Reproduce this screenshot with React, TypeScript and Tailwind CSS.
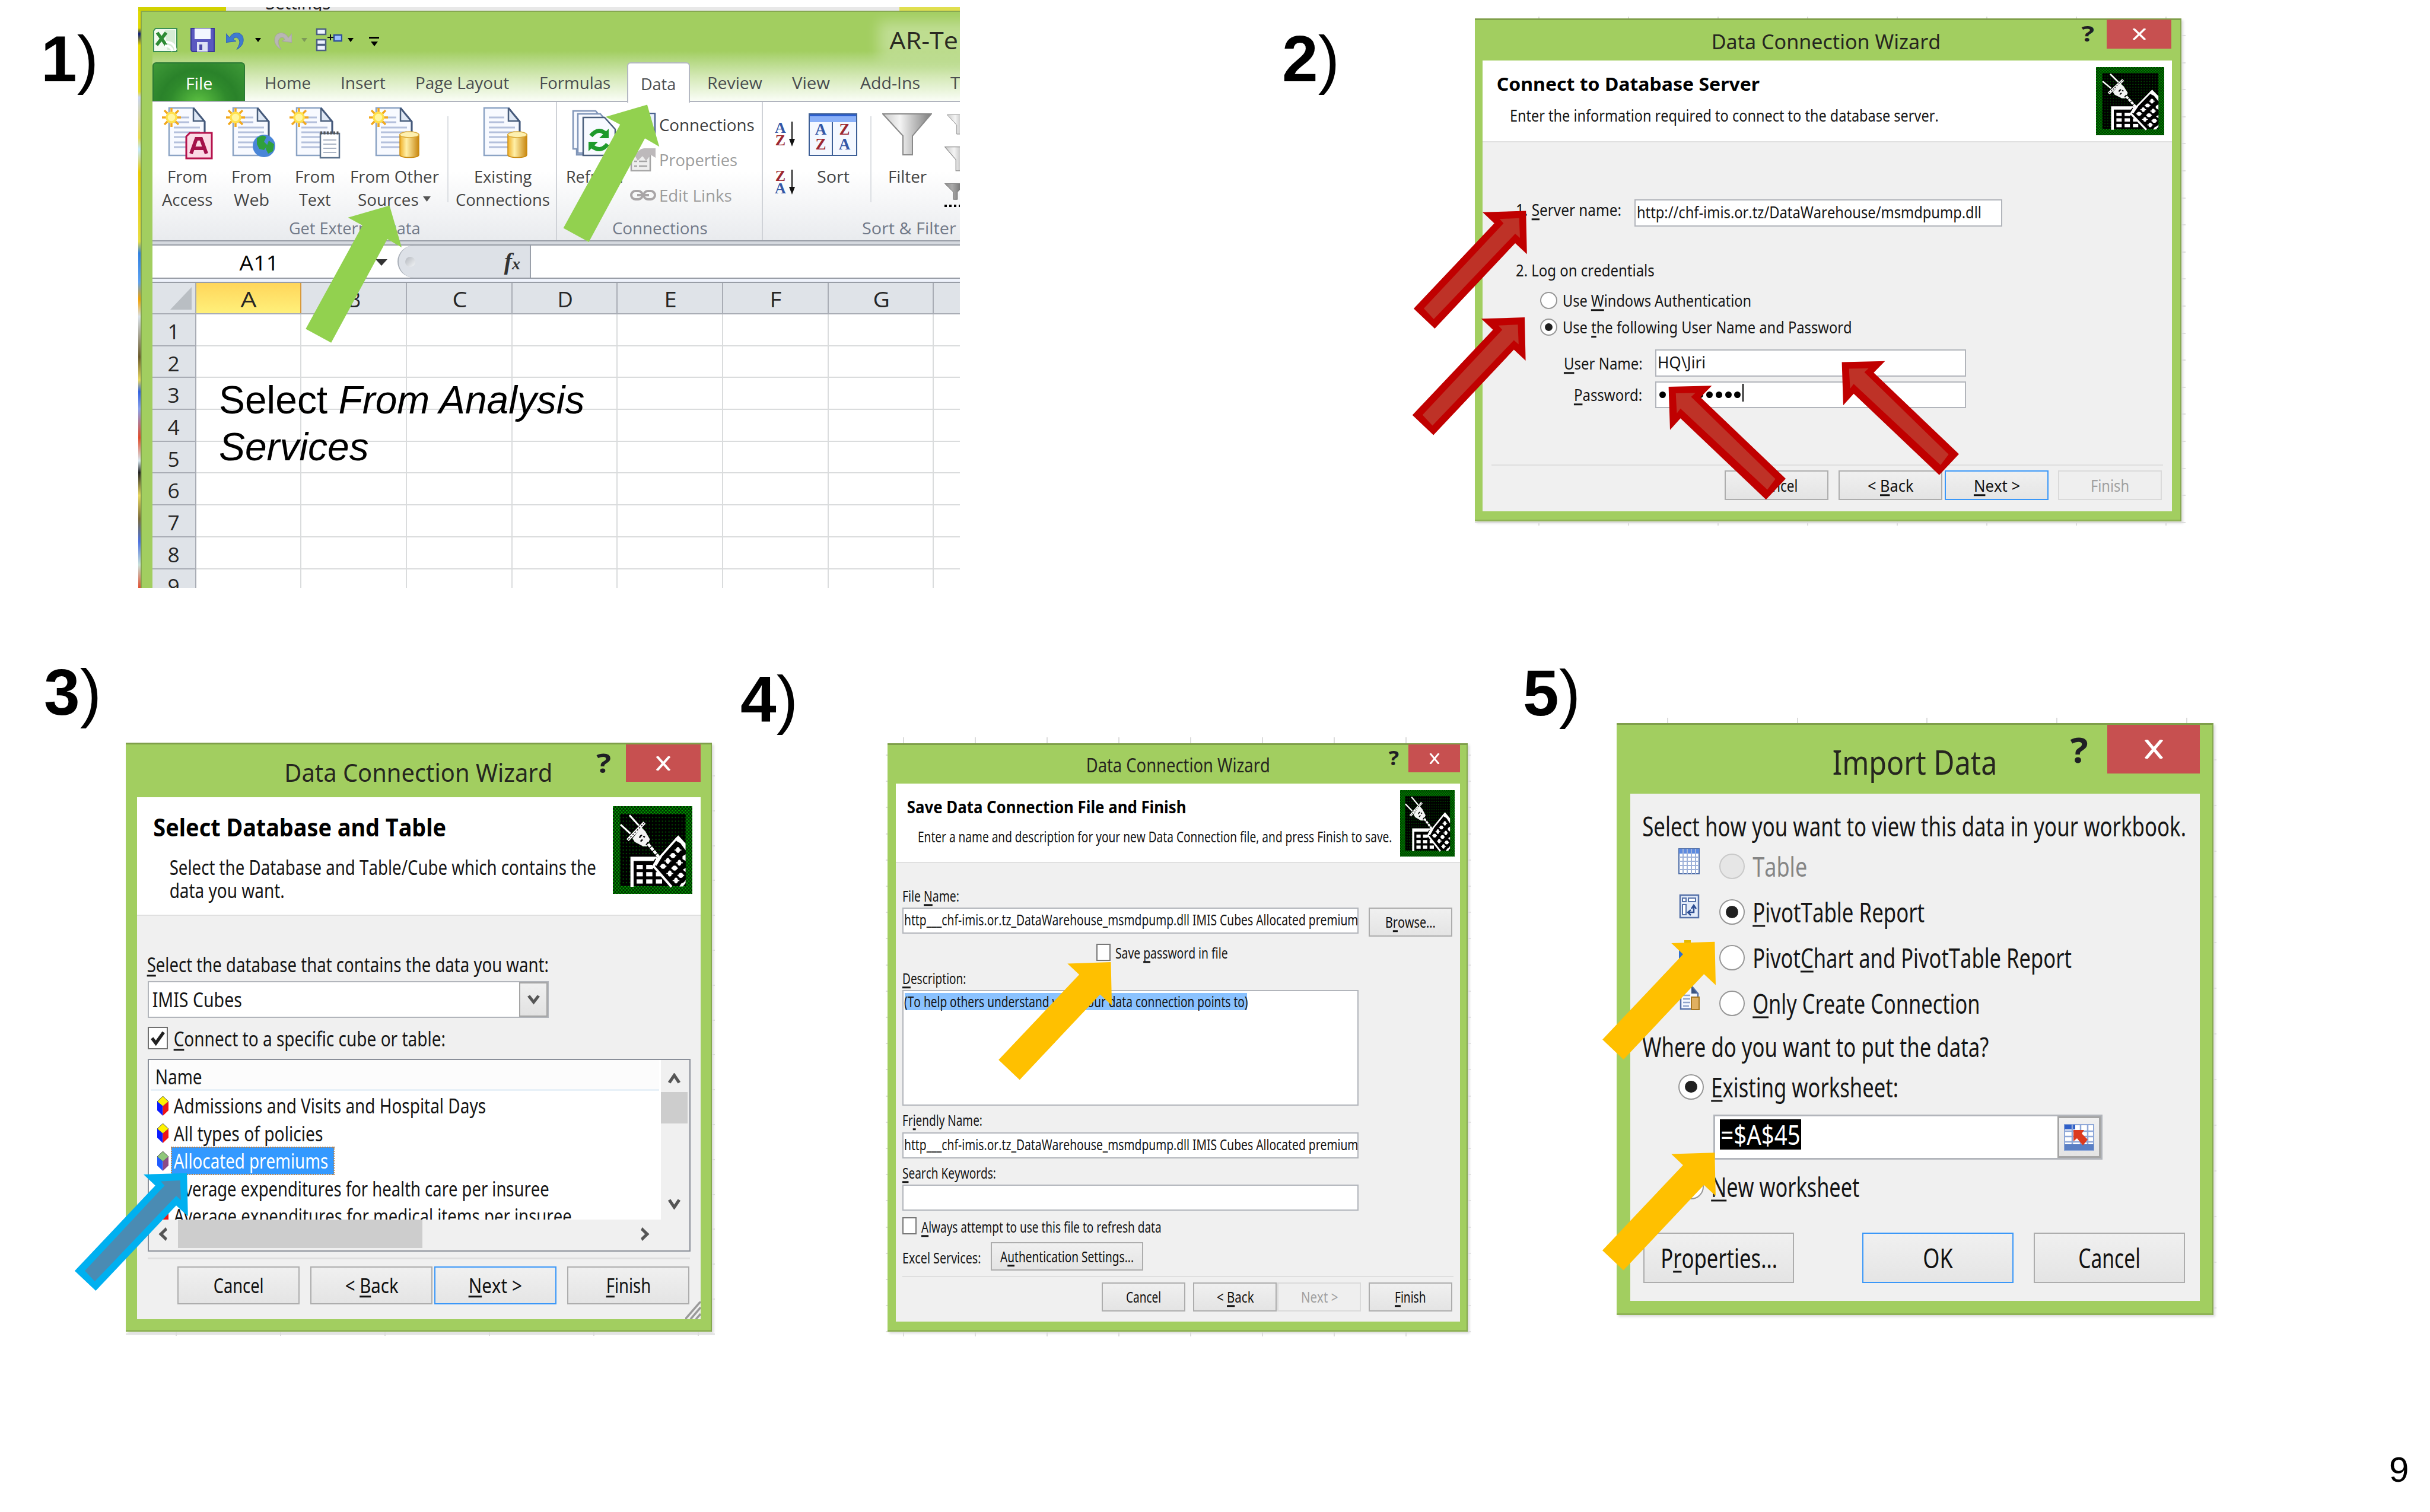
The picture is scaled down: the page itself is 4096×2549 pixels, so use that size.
import React, { useLayoutEffect, useRef, useState } from "react";

type Kids = { children?: React.ReactNode };

/** Single line of text whose ink is condensed or widened to an exact width. */
function T({ w, className = "", children }: Kids & { w: number; className?: string }) {
  const ref = useRef<HTMLSpanElement>(null);
  const [transform, setTransform] = useState("none");
  useLayoutEffect(() => {
    const el = ref.current;
    if (!el) return;
    const fs = parseFloat(getComputedStyle(el).fontSize);
    const k = (w + 0.09 * fs) / el.offsetWidth;
    setTransform(`translate(-0.04em,0.01em) scaleX(${k})`);
  }, [w]);
  return (
    <span className={`block shrink-0 leading-none whitespace-nowrap [font-kerning:none] ${className}`} style={{ width: w }}>
      <span ref={ref} className="inline-block origin-left leading-none whitespace-pre" style={{ transform }}>
        {children}
      </span>
    </span>
  );
}

const U = ({ children }: Kids) => (
  <span className="underline decoration-[2.5px] underline-offset-[4px] [text-decoration-skip-ink:none]">{children}</span>
);

/* ---------- dialog pieces ---------- */

type WinProps = Kids & {
  pos: string;
  bar: string;
  title: string;
  titleW: number;
  titleBox: string;
  help: string;
  helpW: number;
  close: string;
  x: string;
  body: string;
};

function Win({ pos, bar, title, titleW, titleBox, help, helpW, close, x, body, children }: WinProps) {
  return (
    <section
      className={`absolute bg-[#a2ce60] shadow-[inset_0_3px_0_#7f9f4a,inset_-2px_0_0_#86a850,inset_0_-3px_0_#8fb355,3px_3px_4px_#dcdcdc] ${pos}`}
    >
      <header className={`flex items-start ${bar}`}>
        <div className={`flex items-center text-[#26261f] ${titleBox}`}>
          <T w={titleW}>{title}</T>
        </div>
        <div className={`flex items-center font-bold text-[#1f1f24] ${help}`}>
          <T w={helpW}>?</T>
        </div>
        <div className={`flex items-center justify-center bg-[#c75050] ${close}`}>
          <svg viewBox="0 0 20 20" preserveAspectRatio="none" className={x}>
            <path d="M1.800 0L18.200 20M18.200 0L1.800 20" stroke="#fff" strokeWidth="3.200" />
          </svg>
        </div>
      </header>
      <div className={`relative flex flex-col overflow-hidden bg-[#f0f0f0] ${body}`}>{children}</div>
    </section>
  );
}

function Btn({ w, className = "", state = "normal", children }: Kids & { w: number; className?: string; state?: "normal" | "focus" | "off" }) {
  const look =
    state === "focus"
      ? "border-[#3a97f8] bg-linear-to-b from-[#f0f0f0] to-[#e5e5e5] text-[#111]"
      : state === "off"
        ? "border-[#dadada] bg-[#efefef] text-[#a0a0a0]"
        : "border-[#adadad] bg-linear-to-b from-[#f0f0f0] to-[#e4e4e4] text-[#111]";
  return (
    <div className={`flex shrink-0 items-center justify-center border-[2.5px] ${look} ${className}`}>
      <T w={w}>{children}</T>
    </div>
  );
}

const Field = ({ className = "", children }: Kids & { className?: string }) => (
  <div className={`flex shrink-0 overflow-hidden border-2 border-[#b2b5bb] bg-white ${className}`}>{children}</div>
);

function Radio({ size, on = false, off = false }: { size: string; on?: boolean; off?: boolean }) {
  return (
    <div
      className={`flex shrink-0 items-center justify-center rounded-full border-[2.5px] ${size} ${off ? "border-[#c9c9c9] bg-[#e6e6e6]" : "border-[#979797] bg-white"}`}
    >
      {on && <div className="size-[52%] rounded-full bg-[#212121]" />}
    </div>
  );
}

function DbIcon({ className }: { className: string }) {
  const key = "M0 0h44v30h-44z";
  return (
    <svg viewBox="25 28 565 620" preserveAspectRatio="none" className={`shrink-0 ${className}`}>
      <defs>
        <pattern id="rim" x="25" y="28" width="23.200" height="25" patternUnits="userSpaceOnUse">
          <rect width="23.200" height="25" fill="#002b00" />
          <circle cx="6" cy="6" r="6" fill="#00a000" />
          <circle cx="17.600" cy="18.500" r="6" fill="#00a000" />
        </pattern>
        <pattern id="dots" x="88" y="98" width="23.200" height="25.500" patternUnits="userSpaceOnUse">
          <circle cx="11" cy="11" r="4.500" fill="#005a00" />
        </pattern>
      </defs>
      <rect x="25" y="28" width="565" height="620" fill="url(#rim)" />
      <rect x="78" y="84" width="464" height="508" fill="#000" />
      <rect x="78" y="84" width="464" height="508" fill="url(#dots)" />
      <path d="M150 385H340V415H173V598H150z" fill="#fff" />
      <path d="M173 418H310L340 470 440 592H173z" fill="#000" />
      {[443, 494, 545].map((y) =>
        [194, 262, 331].map((x) => (y === 443 && x === 331 ? null : <path key={`${x}-${y}`} d={key} transform={`translate(${x} ${y})`} fill="#fff" />)),
      )}
      <path d="M316 445L490 250 542 320V592H436z" fill="#000" />
      <path d="M143 92L210 165M80 158L150 222" stroke="#fff" strokeWidth="13" />
      <path d="M130 268L250 145" stroke="#fff" strokeWidth="22" />
      <path d="M134 264L246 149" stroke="#000" strokeWidth="6" strokeDasharray="12 10" />
      <path d="M165 255L228 178 255 205 288 262 268 312 240 312 180 280z" fill="#f4f4f4" />
      <path d="M215 252q4-16 18-18M222 278l14-14M242 240l10 8M262 302l16-20" stroke="#000" strokeWidth="10" fill="none" />
      <path d="M275 295L350 385" stroke="#fff" strokeWidth="20" strokeDasharray="26 6" />
      <path d="M300 470L350 400 480 255" stroke="#fff" strokeWidth="15" fill="none" />
      <path d="M310 440L350 380 375 385 335 450z" fill="#fff" />
      <path d="M314 452L442 598" stroke="#fff" strokeWidth="17" />
      <path d="M330 400l-15 20" stroke="#000" strokeWidth="7" />
      <path d="M490 234L542 292V340L505 290 478 275 470 255z" fill="#fff" />
      {[
        [488, 338],
        [452, 377],
        [416, 415],
        [382, 453],
        [498, 428],
        [464, 466],
        [430, 504],
        [508, 517],
        [474, 554],
      ].map(([cx, cy], i) => (
        <g key={cx} fill="#fff">
          <ellipse cx={cx} cy={cy} rx={i % 2 ? 18 : 14} ry={i % 2 ? 18 : 21} />
          <rect x={cx - 24} y={cy - 4} width="48" height="8" />
        </g>
      ))}
      <path d="M542 368l-22 14v20l22 14zM542 465l-20 12 20 16zM542 548q-8 20-30 26l-14 22h24l20-24z" fill="#fff" />
    </svg>
  );
}

function Chevron({ d, className }: { d: string; className: string }) {
  return (
    <svg viewBox="0 0 20 20" preserveAspectRatio="none" className={className}>
      <path d={d} fill="none" stroke="#555" strokeWidth="5" />
    </svg>
  );
}

/* ---------- Excel window icons ---------- */

const Tri = ({ className, fill = "#000" }: { className: string; fill?: string }) => (
  <svg viewBox="0 0 10 6" preserveAspectRatio="none" className={`shrink-0 ${className}`}>
    <path d="M0 0h10L5 6z" fill={fill} />
  </svg>
);

const Sheet = ({ x = 12 }: { x?: number }) => (
  <g transform={`translate(${x} 0)`}>
    <path d="M0 1h41l19 23v57H0z" fill="#f8faff" stroke="#8ba3c4" strokeWidth="2.500" />
    <path d="M41 1v22h19" fill="#dfe8f5" stroke="#4a5f7d" strokeWidth="2.500" />
    <path d="M41 1l19 23v57" fill="none" stroke="#45597a" strokeWidth="3" />
    <path d="M8 17h26M8 25h26M8 34h44M8 42h44M8 50h44M8 59h44M8 67h44" stroke="#b4c0dc" strokeWidth="3" />
  </g>
);

const Spark = () => (
  <g stroke="#f2a81d" strokeWidth="3.500">
    <path d="M16 1v32M0 17h32M4 5l24 24M28 5L4 29" />
    <circle cx="16" cy="17" r="8" fill="#fff6a0" stroke="#ffe14d" />
  </g>
);

const Cylinder = () => (
  <g>
    <path d="M52 46v34c0 6 32 6 32 0V46z" fill="url(#gold)" stroke="#c98a10" strokeWidth="1.500" />
    <ellipse cx="68" cy="46" rx="16" ry="5" fill="#fdf0b0" stroke="#d9a93a" strokeWidth="1.500" />
  </g>
);

function DocIcon({ kind }: { kind: "access" | "web" | "text" | "other" | "existing" }) {
  return (
    <svg viewBox="0 0 86 87" className="h-[87px] w-[86px] overflow-visible">
      <defs>
        <linearGradient id="gold">
          <stop offset="0" stopColor="#f0b028" />
          <stop offset=".35" stopColor="#fff0a8" />
          <stop offset="1" stopColor="#c98710" />
        </linearGradient>
      </defs>
      <Sheet />
      {kind !== "existing" && <Spark />}
      {kind === "access" && (
        <g>
          <path d="M47 43h37v43H41V49z" fill="#fbdbe6" stroke="#b5124c" strokeWidth="3" />
          <path d="M49 78L58 53h8l9 25M54 69h17" fill="none" stroke="#a3114a" strokeWidth="6" />
        </g>
      )}
      {kind === "web" && (
        <g>
          <circle cx="64" cy="65" r="19" fill="#4a86d8" />
          <path d="M52 52q10-8 16-2l-4 8 6 6-6 8-8-2-4-8zM72 56l9 6-2 12-8 4-4-8z" fill="#2fa03c" />
        </g>
      )}
      {kind === "text" && (
        <g>
          <path d="M52 44h32v41H52z" fill="#fff" stroke="#5c728c" strokeWidth="2.500" />
          <path d="M52 43h32" stroke="#555" strokeWidth="5" strokeDasharray="3 2.500" />
          <path d="M57 55h22M57 62h22M57 69h22M57 76h22" stroke="#aab4c4" strokeWidth="2" />
        </g>
      )}
      {(kind === "other" || kind === "existing") && <Cylinder />}
    </svg>
  );
}

function BigButton({ w, icon, l1, w1, l2, w2, arrow = false }: { w: string; icon: React.ReactNode; l1: string; w1: number; l2?: string; w2?: number; arrow?: boolean }) {
  return (
    <div className={`flex shrink-0 flex-col items-center pt-[8.5px] ${w}`}>
      <div className="flex h-[87px] items-center justify-center">{icon}</div>
      <div className="mt-[10.500px] flex h-[38px] items-center">
        <T w={w1}>{l1}</T>
      </div>
      <div className="flex h-[39px] items-center gap-[9px]">
        {l2 && <T w={w2 ?? 10}>{l2}</T>}
        {arrow && <Tri className="h-[9px] w-[13px]" fill="#555" />}
      </div>
    </div>
  );
}

function AZ({ top, bottom, tc, bc }: { top: string; bottom: string; tc: string; bc: string }) {
  return (
    <div className="flex h-[42px] w-[34px] items-stretch justify-between font-['Liberation_Serif',serif] text-[26px] font-bold">
      <div className="flex flex-col items-center justify-between leading-[21px]">
        <span className={tc}>{top}</span>
        <span className={bc}>{bottom}</span>
      </div>
      <svg viewBox="0 0 10 42" className="h-[42px] w-[10px]">
        <path d="M5 0v34" stroke="#111" strokeWidth="2" />
        <path d="M0 29h10L5 42z" fill="#111" />
      </svg>
    </div>
  );
}

function Funnel({ className }: { className: string }) {
  return (
    <svg viewBox="0 0 84 72" preserveAspectRatio="none" className={className}>
      <defs>
        <linearGradient id="steel">
          <stop offset="0" stopColor="#c9c9c9" />
          <stop offset=".35" stopColor="#f4f4f4" />
          <stop offset="1" stopColor="#7d7d7d" />
        </linearGradient>
      </defs>
      <path d="M1 1h82L51 38v32H35V38z" fill="url(#steel)" stroke="#8a8a8a" strokeWidth="2" />
    </svg>
  );
}

/* ---------- panel 1 ---------- */

const cols = ["A", "B", "C", "D", "E", "F", "G", ""];
const colW = [24, 18, 22, 23, 18, 17, 25, 0];

function ExcelWindow() {
  return (
    <section className="absolute top-[12px] left-[233px] flex h-[979px] w-[1385px] flex-col overflow-hidden bg-white font-['Open_Sans','Noto_Sans',sans-serif] text-[28px] text-[#444]">
      <div className="flex h-[6px] shrink-0 overflow-hidden">
        <div className="w-[148px] bg-[#d2d200]" />
        <div className="flex flex-1 items-end bg-[#e8e8e8] pl-[68px] font-['Noto_Sans',sans-serif] text-[32px] leading-none text-[#222]">
          <div className="mb-[-2px] flex">
            <T w={107}>Settings</T>
          </div>
        </div>
        <div className="w-[102px] bg-[#e0df4e]" />
      </div>
      <div className="flex min-h-0 flex-1">
        <div className="w-[4px] shrink-0 bg-[linear-gradient(180deg,#e0d800_0%,#e0d800_3%,#0a1a7a_4%,#e6d800_6%,#e8dc20_14%,#c8d4f0_15%,#e6d84a_22%,#bfe8ff_24%,#e8c800_28%,#e8dc40_40%,#2f7fe0_42%,#5aa0f0_47%,#f0a000_50%,#d8e0e8_53%,#6a5a2a_60%,#e8d860_64%,#2f5fe0_66%,#8aa0e8_69%,#e04a2a_74%,#d8e8f0_78%,#222_80%,#e8d860_84%,#7a6a3a_88%,#4a70e0_92%,#c8e0d8_96%,#e05030_100%)]" />
        <div className="flex min-w-0 flex-1 flex-col border-t-[2.5px] border-l-2 border-[#86a850] bg-[#a2ce60] pl-[18px]">
          {/* title + tabs */}
          <div className="flex h-[150px] shrink-0 flex-col bg-linear-to-b from-[#a2ce60] from-44% via-[#d3e8b4] via-72% to-[#fafdf6]">
            <div className="flex h-[85px] shrink-0 items-center pt-[9px]">
              <svg viewBox="0 0 41 41" className="ml-px size-[41px] shrink-0">
                <path d="M4 1h36v39H1V5z" fill="#f2faf0" stroke="#3b8f55" strokeWidth="2" />
                <path d="M20 4h17v33H24z" fill="#d6ecd4" />
                <path d="M7 8l15 21M22 8L6 29" stroke="#2e8b34" strokeWidth="5.500" />
                <path d="M22 24q14 0 16 13M20 30q10 0 13 9" stroke="#fff" strokeWidth="4" fill="none" />
              </svg>
              <div className="ml-[12px] h-[46px] w-[2px] bg-[#7f9c56]" />
              <svg viewBox="0 0 41 41" className="ml-[10px] size-[41px] shrink-0">
                <path d="M1 1h39v39H3l-2-3z" fill="#5a58c0" stroke="#3a389a" strokeWidth="2" />
                <path d="M7 1h27v18H7z" fill="#f3f6ff" />
                <path d="M11 24h18v16H11z" fill="#dfe3f5" />
                <path d="M15 28h5v9h-5z" fill="#4b49a8" />
              </svg>
              <svg viewBox="0 0 31 32" className="ml-[19px] h-[33px] w-[31px] shrink-0">
                <path d="M6 12C12 0 28 2 29 14C30 22 25 28 18 32C22 25 25 19 21 14C18 10 14 11 12 15L17 18L0 20L0 5z" fill="#3f7ad0" stroke="#2c5fb4" strokeWidth="1" />
              </svg>
              <Tri className="ml-[18px] h-[7px] w-[10px]" />
              <svg viewBox="0 0 31 32" className="ml-[21px] h-[33px] w-[31px] shrink-0">
                <path d="M25 12C19 0 3 2 2 14C1 22 6 28 13 32C9 25 6 19 10 14C13 10 17 11 19 15L14 18L31 20L31 5z" fill="#b9b6b4" stroke="#a5a29f" strokeWidth="1" />
              </svg>
              <Tri className="ml-[16px] h-[7px] w-[10px]" fill="#7d9a58" />
              <svg viewBox="0 0 45 40" className="ml-[14px] h-[40px] w-[45px] shrink-0">
                <path d="M2 2h15v9H2zM2 20h15v8H2zM2 29h15v9H2z" fill="#eef3ff" stroke="#4b5f80" strokeWidth="2.500" />
                <path d="M31 12h13v10H31z" fill="#9dc0ff" stroke="#2f4f9a" strokeWidth="2.500" />
                <path d="M20 16h10M25 11v10" stroke="#111" strokeWidth="2" />
              </svg>
              <Tri className="ml-[9px] h-[7px] w-[10px]" />
              <div className="ml-[13px] h-[46px] w-[2px] bg-[#7f9c56]" />
              <div className="mt-[6px] ml-[13px] flex flex-col items-center gap-[5px]">
                <div className="h-[3px] w-[17px] bg-black" />
                <Tri className="h-[8px] w-[12px]" />
              </div>
              <div className="ml-[858px] flex h-[30px] w-[140px] shrink-0 items-center bg-white/30 pl-[4px] text-[41px] text-[#2a2a22] shadow-[0_0_22px_16px_rgba(255,255,255,0.32)]">
                <T w={112}>AR-Te</T>
              </div>
            </div>
            <nav className="flex h-[65px] shrink-0 items-center text-[#4a4d50]">
              <div className="flex h-[65px] w-[156px] shrink-0 items-center justify-center rounded-t-[6px] border-2 border-b-0 border-[#2c7a35] bg-[radial-gradient(ellipse_at_50%_110%,#5fc443_0%,#2f8a2c_45%,#2a822a_60%,#3f9a38_100%)] pt-[2px] text-white">
                <T w={42.5}>File</T>
              </div>
              <div className="flex h-full items-center pt-[3px]">
                <T w={75.5} className="ml-[34px]">Home</T>
                <T w={73} className="ml-[52px]">Insert</T>
                <T w={156} className="ml-[53px]">Page Layout</T>
                <T w={118} className="ml-[53px]">Formulas</T>
              </div>
              <div className="relative z-10 mb-[-3px] ml-[29px] flex h-[68px] w-[106px] shrink-0 items-center justify-center rounded-t-[6px] border-[2.5px] border-b-0 border-[#b4b8c2] bg-white pt-px">
                <T w={56.5}>Data</T>
              </div>
              <div className="flex h-full items-center pt-[3px]">
                <T w={90} className="ml-[30px]">Review</T>
                <T w={61.5} className="ml-[53.5px]">View</T>
                <T w={98.5} className="ml-[53.500px]">Add-Ins</T>
                <T w={75} className="ml-[53px]">Team</T>
              </div>
            </nav>
          </div>
          {/* ribbon */}
          <div className="flex h-[235px] shrink-0 border-t-[2.500px] border-[#b0b4be] bg-linear-to-b from-white from-50% to-[#e9ebee]">
            <div className="flex w-[682px] shrink-0 flex-col border-r-[2.500px] border-[#cfd2d7]">
              <div className="flex h-[192px] pl-[4px]">
                <BigButton w="w-[109px]" icon={<DocIcon kind="access" />} l1="From" w1={65.5} l2="Access" w2={83} />
                <BigButton w="w-[108px]" icon={<DocIcon kind="web" />} l1="From" w1={66} l2="Web" w2={58} />
                <BigButton w="w-[106px]" icon={<DocIcon kind="text" />} l1="From" w1={66} l2="Text" w2={51.5} />
                <BigButton w="w-[162px]" icon={<DocIcon kind="other" />} l1="From Other" w1={147.5} l2="Sources" w2={100} arrow />
                <div className="mt-[24px] ml-[8px] h-[145px] w-[2px] shrink-0 bg-[#dcdfe3]" />
                <BigButton w="ml-[5px] w-[172px]" icon={<DocIcon kind="existing" />} l1="Existing" w1={95} l2="Connections" w2={156} />
              </div>
              <div className="flex h-[40px] items-center justify-center text-[#717988]">
                <T w={219}>Get External Data</T>
              </div>
            </div>
            <div className="flex w-[347px] shrink-0 flex-col border-r-[2.500px] border-[#cfd2d7]">
              <div className="flex h-[192px]">
                <BigButton
                  w="ml-[3px] w-[120px]"
                  icon={
                    <svg viewBox="0 0 76 78" className="h-[80px] w-[76px]">
                      <g fill="#f8faff" stroke="#7f95b8" strokeWidth="2.500">
                        <path d="M2 2h38l10 12v62H8V66H2z" />
                        <path d="M10 7h38l10 12v54H10z" />
                        <path d="M19 13h36l18 20v44H19z" stroke="#4a5f7d" />
                      </g>
                      <path d="M32 44q14-16 26-2M60 58q-12 16-28 2" fill="none" stroke="#1f9a2c" strokeWidth="7" />
                      <path d="M62 32v16H46zM28 70V54h16z" fill="#1f9a2c" />
                    </svg>
                  }
                  l1="Refresh"
                  w1={94}
                />
                <div className="flex flex-col pt-[8px] text-[#9c9c9c]">
                  <div className="flex h-[59.500px] items-center gap-[6px] text-[#3c3c3c]">
                    <svg viewBox="0 0 44 40" className="h-[40px] w-[44px]">
                      <path d="M2 6h26v32H2zM18 1h24v38H18z" fill="#eaf1fc" stroke="#4a6390" strokeWidth="2.500" />
                    </svg>
                    <T w={158}>Connections</T>
                  </div>
                  <div className="flex h-[59.500px] items-center gap-[6px]">
                    <svg viewBox="0 0 44 40" className="h-[40px] w-[44px]">
                      <path d="M2 13h32v26H2z" fill="#eee" stroke="#a5a5a5" strokeWidth="2.500" />
                      <path d="M8 13q8-12 16-12h19v16l-8-5-8 10-6-8-8 8z" fill="#bdb9bb" />
                      <path d="M7 23h5M15 23h14M7 31h5M15 31h14" stroke="#a5a5a5" strokeWidth="2.500" />
                    </svg>
                    <T w={130}>Properties</T>
                  </div>
                  <div className="flex h-[59.500px] items-center gap-[6px]">
                    <svg viewBox="0 0 44 20" className="h-[20px] w-[44px]">
                      <g fill="none" stroke="#a9a5a7" strokeWidth="4">
                        <rect x="2" y="3" width="19" height="14" rx="7" />
                        <rect x="23" y="3" width="19" height="14" rx="7" />
                        <path d="M12 10h20" />
                      </g>
                    </svg>
                    <T w={120.5}>Edit Links</T>
                  </div>
                </div>
              </div>
              <div className="flex h-[40px] items-center justify-center text-[#717988]">
                <T w={158}>Connections</T>
              </div>
            </div>
            <div className="flex w-[400px] shrink-0 flex-col">
              <div className="flex h-[192px]">
                <div className="ml-[20px] flex w-[34px] flex-col gap-[39px] pt-[33px]">
                  <AZ top="A" bottom="Z" tc="text-[#3457a6]" bc="text-[#9c2730]" />
                  <AZ top="Z" bottom="A" tc="text-[#9c2730]" bc="text-[#3457a6]" />
                </div>
                <BigButton
                  w="ml-[9px] w-[110px]"
                  icon={
                    <div className="mt-[5px] flex h-[72px] w-[82px] flex-col border-[2.500px] border-[#3d5f96] bg-[#f4f8ff] font-['Liberation_Serif',serif] text-[27px] leading-[27px] font-bold">
                      <div className="h-[13px] shrink-0 border-t-[3px] border-[#2c5fd0] bg-[#8ab0f8]" />
                      <div className="grid flex-1 grid-cols-2 text-center">
                        <div className="flex flex-col border-r-[2.500px] border-[#3d5f96] leading-[25px]">
                          <span className="text-[#3457a6]">A</span>
                          <span className="text-[#9c2730]">Z</span>
                        </div>
                        <div className="flex flex-col leading-[25px]">
                          <span className="text-[#9c2730]">Z</span>
                          <span className="text-[#3457a6]">A</span>
                        </div>
                      </div>
                    </div>
                  }
                  l1="Sort"
                  w1={53}
                />
                <div className="mt-[24px] ml-[8px] h-[145px] w-[2px] shrink-0 bg-[#dcdfe3]" />
                <BigButton w="ml-[5px] w-[110px]" icon={<Funnel className="mt-[5px] h-[72px] w-[84px]" />} l1="Filter" w1={63} />
                <div className="ml-[8px] flex flex-col gap-[20px] pt-[21px]">
                  <Funnel className="ml-[4px] h-[34px] w-[40px]" />
                  <Funnel className="h-[42px] w-[46px]" />
                  <div className="flex flex-col">
                    <Funnel className="h-[28px] w-[36px] brightness-70" />
                    <div className="mt-[8px] h-[4px] w-[40px] bg-[repeating-linear-gradient(90deg,#000_0_4px,transparent_4px_8px)]" />
                  </div>
                </div>
              </div>
              <div className="flex h-[40px] items-center pl-[168px] text-[#717988]">
                <T w={156}>Sort &amp; Filter</T>
              </div>
            </div>
          </div>
          {/* formula bar */}
          <div className="flex h-[9px] shrink-0 flex-col border-t-2 border-b-2 border-[#989da6] bg-[#d5d9df]" />
          <div className="flex h-[54px] shrink-0 items-stretch bg-[#dde1e7] text-[35px] text-black">
            <div className="flex w-[413px] shrink-0 items-center bg-white pt-[2px] pl-[148px]">
              <T w={63}>A11</T>
              <Tri className="ml-[165px] h-[11px] w-[20px]" fill="#333" />
            </div>
            <div className="flex w-[223px] shrink-0 items-center bg-white">
              <div className="flex h-full flex-1 items-center justify-between rounded-l-full border-l-2 border-[#a9afb8] bg-[#dde1e7] pr-[16px] pl-[11px]">
                <div className="size-[17px] rounded-full bg-linear-to-br from-[#b4b8be] to-[#f4f6f8]" />
                <span className="font-['Liberation_Serif',serif] text-[40px] leading-none font-bold text-[#333] italic">
                  f<span className="text-[28px]">x</span>
                </span>
              </div>
            </div>
            <div className="flex-1 border-l-2 border-[#9aa0aa] bg-white" />
          </div>
          <div className="h-[9px] shrink-0 border-t-2 border-b-[2.500px] border-[#989da6] bg-[#eef2fb]" />
          {/* grid */}
          <div className="flex h-[53px] shrink-0 border-b-[2.500px] border-[#a9adb5] bg-[#dfe3e8] text-[36px] text-[#262626]">
            <div className="flex w-[73.500px] shrink-0 items-end justify-end border-r-2 border-[#a9adb5] pr-[6px] pb-[6px]">
              <svg viewBox="0 0 36 38" className="h-[38px] w-[36px]">
                <path d="M36 0v38H0z" fill="#b9bec3" />
              </svg>
            </div>
            {cols.map((c, i) => (
              <div
                key={i}
                className={`flex w-[177.700px] shrink-0 items-center justify-center border-r-2 pt-[5px] pl-[2px] ${i === 0 ? "border-[#d99a3a] bg-linear-to-b from-[#ffd65a] to-[#fff07a]" : "border-[#a9adb5]"}`}
              >
                {c && <T w={colW[i]}>{c}</T>}
              </div>
            ))}
          </div>
          {[1, 2, 3, 4, 5, 6, 7, 8, 9].map((n) => (
            <div key={n} className="flex h-[53.700px] shrink-0 bg-white text-[35px] text-[#262626]">
              <div className="flex w-[73.500px] shrink-0 items-center justify-center border-r-2 border-b-2 border-[#a9adb5] bg-[#dfe3e8] pt-[5px]">
                <T w={17}>{n}</T>
              </div>
              {cols.map((_, i) => (
                <div key={i} className="w-[177.700px] shrink-0 border-r-2 border-b-2 border-[#dadcdd]" />
              ))}
            </div>
          ))}
        </div>
      </div>
    </section>
  );
}

/* ---------- panel 2 ---------- */

function ServerDialog() {
  return (
    <Win
      pos="left-[2486px] top-[31px] w-[1191px] h-[848px]"
      bar="h-[71px]"
      title="Data Connection Wizard"
      titleW={384}
      titleBox="ml-[400px] h-[77px] text-[34px]"
      help="ml-[240px] h-[52px] text-[36px]"
      helpW={18}
      close="ml-[23px] mt-[2px] h-[49px] w-[109px]"
      x="h-[19px] w-[24px]"
      body="ml-[13px] w-[1162px] h-[760px]"
    >
      <div className="flex h-[138px] shrink-0 border-b-2 border-[#e0e0e0] bg-white">
        <div className="flex w-[1034px] shrink-0 flex-col">
          <div className="mt-[19px] flex h-[40px] items-center pl-[25px] text-[31px] font-bold text-black">
            <T w={441}>Connect to Database Server</T>
          </div>
          <div className="mt-[13px] flex h-[40px] items-center pl-[47px]">
            <T w={720}>Enter the information required to connect to the database server.</T>
          </div>
        </div>
        <DbIcon className="mt-[11px] h-[115px] w-[115px]" />
      </div>
      <div className="mt-[96px] flex h-[46px] items-start pl-[57px]">
        <div className="flex h-[34px] items-center">
          <T w={176}>
            1. <U>S</U>erver name:
          </T>
        </div>
        <Field className="ml-[23px] h-[46px] w-[620px] items-center pb-[3px] pl-[3px]">
          <T w={579}>http://chf-imis.or.tz/DataWarehouse/msmdpump.dll</T>
        </Field>
      </div>
      <div className="mt-[58px] flex h-[30px] items-center pl-[57px]">
        <T w={231}>2. Log on credentials</T>
      </div>
      <div className="mt-[21px] flex h-[30px] items-center gap-[10px] pl-[97px]">
        <Radio size="size-[29px]" />
        <T w={316}>
          Use <U>W</U>indows Authentication
        </T>
      </div>
      <div className="mt-[15px] flex h-[30px] items-center gap-[10px] pl-[97px]">
        <Radio size="size-[29px]" on />
        <T w={485}>
          Use <U>t</U>he following User Name and Password
        </T>
      </div>
      <div className="mt-[23px] flex h-[46px] items-center pl-[138px]">
        <T w={130}>
          <U>U</U>ser Name:
        </T>
        <Field className="ml-[23px] h-[46px] w-[524px] items-center pb-[4px] pl-[3px]">
          <T w={79}>HQ\Jiri</T>
        </Field>
      </div>
      <div className="mt-[8px] flex h-[45px] items-center pl-[155px]">
        <T w={113}>
          <U>P</U>assword:
        </T>
        <Field className="ml-[23px] h-[45px] w-[524px] items-center pl-[5px]">
          <div className="flex items-center gap-[4.800px]">
            {[0, 1, 2, 3, 4, 5, 6, 7, 8].map((i) => (
              <div key={i} className="size-[11px] rounded-full bg-black" />
            ))}
          </div>
          <div className="mb-[7px] ml-[3px] h-[30px] w-[2px] bg-black" />
        </Field>
      </div>
      <div className="mx-[15px] mt-[95px] h-[2px] shrink-0 bg-[#dedede]" />
      <div className="mt-[8px] flex h-[50px] pl-[408px]">
        <Btn w={68} className="w-[175px]">Cancel</Btn>
        <Btn w={75.5} className="ml-[17px] w-[175px]">
          &lt; <U>B</U>ack
        </Btn>
        <Btn w={75.5} className="ml-[4px] w-[175px]" state="focus">
          <U>N</U>ext &gt;
        </Btn>
        <Btn w={62.5} className="ml-[16px] w-[175px]" state="off">Finish</Btn>
      </div>
    </Win>
  );
}

/* ---------- panel 3 ---------- */

function Cube({ sel = false }: { sel?: boolean }) {
  return (
    <svg viewBox="0 0 21 33" className="h-[33px] w-[21px] shrink-0">
      <path d="M10.500 0L20 9l-9.500 8L1 9z" fill={sel ? "#8fc77a" : "#fff200"} stroke="#555" strokeWidth="1" />
      <path d="M1 9l9.500 8v16L1 24z" fill={sel ? "#1f5cff" : "#0b1bff"} />
      <path d="M20 9l-9.500 8v16L20 24z" fill={sel ? "#8c4a86" : "#f01414"} />
    </svg>
  );
}

const items: [string, number][] = [
  ["Admissions and Visits and Hospital Days", 523.5],
  ["All types of policies", 249],
  ["Allocated premiums", 257.5],
  ["Average expenditures for health care per insuree", 630],
  ["Average expenditures for medical items per insuree", 668],
];

function TableDialog() {
  return (
    <Win
      pos="left-[212px] top-[1252px] w-[988px] h-[993px]"
      bar="h-[92px]"
      title="Data Connection Wizard"
      titleW={448}
      titleBox="ml-[269px] h-[99px] text-[42px]"
      help="ml-[78px] h-[67px] text-[45px]"
      helpW={20}
      close="ml-[28px] mt-[3px] h-[63px] w-[126px]"
      x="h-[24px] w-[26px]"
      body="ml-[19px] w-[950px] h-[880px] text-[34px]"
    >
      <div className="flex h-[200px] shrink-0 border-b-[2.500px] border-[#e0e0e0] bg-white">
        <div className="flex w-[802px] shrink-0 flex-col">
          <div className="mt-[30px] flex h-[40px] items-center pl-[29px] text-[41px] font-bold text-black">
            <T w={490}>Select Database and Table</T>
          </div>
          <div className="mt-[29px] flex h-[38px] items-center pl-[56px]">
            <T w={716}>Select the Database and Table/Cube which contains the</T>
          </div>
          <div className="mt-[1px] flex h-[38px] items-center pl-[56px]">
            <T w={191}>data you want.</T>
          </div>
        </div>
        <DbIcon className="mt-[15px] h-[148px] w-[134px]" />
      </div>
      <div className="mt-[62px] flex h-[40px] shrink-0 items-center pl-[18px]">
        <T w={674}>
          <U>S</U>elect the database that contains the data you want:
        </T>
      </div>
      <div className="mt-[8px] ml-[18px] flex h-[62px] w-[676px] shrink-0 border-[2.500px] border-[#b2b5bb] bg-white">
        <div className="flex flex-1 items-center pl-[7px]">
          <T w={148}>IMIS Cubes</T>
        </div>
        <div className="flex w-[48px] items-center justify-center border-2 border-[#a5a5a5] bg-linear-to-b from-[#f0f0f0] to-[#e2e2e2]">
          <Chevron d="M2 3l8 12 8-12" className="h-[18px] w-[21px]" />
        </div>
      </div>
      <div className="mt-[15px] flex h-[38px] shrink-0 items-center pl-[18px]">
        <div className="flex h-[38px] w-[34px] items-center justify-center border-[2.500px] border-[#707070] bg-white">
          <svg viewBox="0 0 24 24" className="size-[26px]">
            <path d="M3 12l6 8L21 3" fill="none" stroke="#212121" strokeWidth="5" />
          </svg>
        </div>
        <T w={455} className="mt-[2px] ml-[11px]">
          <U>C</U>onnect to a specific cube or table:
        </T>
      </div>
      <div className="mt-[16px] ml-[18px] flex h-[325px] w-[915px] shrink-0 flex-col border-[2.500px] border-[#8a8f99] bg-[#f0f0f0]">
        <div className="flex h-[269px] shrink-0">
          <div className="flex w-[863px] shrink-0 flex-col overflow-hidden bg-white">
            <div className="mx-[3px] flex h-[52px] shrink-0 items-center border-b-[3px] border-[#e8f1f8] bg-[#fcfcfc] pt-[6px] pl-[9px]">
              <T w={76}>Name</T>
            </div>
            <div className="mt-[2px] flex flex-1 flex-col overflow-hidden">
              {items.map(([name, w], i) => (
                <div key={name} className="flex h-[46.500px] shrink-0 items-center pl-[13px]">
                  <Cube sel={i === 2} />
                  <div className={`ml-[4px] flex h-[46px] items-center pr-[11px] pl-[5px] ${i === 2 ? "bg-[#3399ff] text-white outline-2 -outline-offset-1 outline-[#b5824e] outline-dotted" : ""}`}>
                    <T w={w}>{name}</T>
                  </div>
                </div>
              ))}
            </div>
          </div>
          <div className="flex w-[45px] flex-col items-center">
            <Chevron d="M2 17L10 4l8 13" className="mt-[22px] h-[19px] w-[21px] shrink-0" />
            <div className="mt-[13px] h-[53px] w-full shrink-0 bg-[#cdcdcd]" />
            <Chevron d="M2 3l8 13 8-13" className="mt-[126px] h-[19px] w-[21px] shrink-0" />
          </div>
        </div>
        <div className="flex h-[48px] items-center">
          <Chevron d="M17 2L5 10l12 8" className="ml-[16px] h-[23px] w-[16px] shrink-0" />
          <div className="ml-[17px] h-[48px] w-[412px] shrink-0 bg-[#cdcdcd]" />
          <Chevron d="M3 2l12 8-12 8" className="ml-[367px] h-[23px] w-[16px] shrink-0" />
        </div>
      </div>
      <div className="mx-[18px] mt-[10px] h-[3px] shrink-0 bg-[#dedede]" />
      <div className="mt-[12px] flex h-[64px] shrink-0 pl-[68px]">
        <Btn w={82} className="w-[206px]">Cancel</Btn>
        <Btn w={87} className="ml-[18px] w-[206px]">
          &lt; <U>B</U>ack
        </Btn>
        <Btn w={87.5} className="ml-[3px] w-[206px]" state="focus">
          <U>N</U>ext &gt;
        </Btn>
        <Btn w={73} className="ml-[18px] w-[206px]">
          <U>F</U>inish
        </Btn>
      </div>
      <svg viewBox="0 0 26 30" className="absolute right-0 bottom-0 h-[30px] w-[26px]">
        <path d="M0 30L26 0M9 30L26 10M18 30l8-9" stroke="#9a9a9a" strokeWidth="3.500" />
      </svg>
    </Win>
  );
}

/* ---------- panel 4 ---------- */

const fileText = "http___chf-imis.or.tz_DataWarehouse_msmdpump.dll IMIS Cubes Allocated premium";

function SaveDialog() {
  return (
    <Win
      pos="left-[1496px] top-[1253px] w-[978px] h-[992px]"
      bar="h-[68px]"
      title="Data Connection Wizard"
      titleW={307}
      titleBox="ml-[336px] h-[73px] text-[33px]"
      help="ml-[203px] h-[48px] text-[34px]"
      helpW={14}
      close="ml-[18px] mt-[2px] h-[47px] w-[87px]"
      x="h-[18px] w-[18px]"
      body="ml-[14px] w-[951px] h-[907px] text-[25px]"
    >
      <div className="flex h-[134px] shrink-0 border-b-2 border-[#e0e0e0] bg-white">
        <div className="flex w-[850px] shrink-0 flex-col">
          <div className="mt-[22px] flex h-[32px] items-center pl-[20px] text-[29px] font-bold text-black">
            <T w={468}>Save Data Connection File and Finish</T>
          </div>
          <div className="mt-[19px] flex h-[32px] items-center pl-[38px]">
            <T w={797}>Enter a name and description for your new Data Connection file, and press Finish to save.</T>
          </div>
        </div>
        <DbIcon className="mt-[11px] h-[112px] w-[92px]" />
      </div>
      <div className="mt-[42px] flex h-[26px] items-center pl-[12px]">
        <T w={94}>
          File <U>N</U>ame:
        </T>
      </div>
      <div className="mt-[7px] flex h-[49px] shrink-0 items-start pl-[11px]">
        <Field className="h-[44px] w-[769px] items-center pb-[3px] pl-[2px]">
          <T w={763}>{fileText}</T>
        </Field>
        <Btn w={83} className="ml-[17px] h-[49px] w-[141px]">
          B<U>r</U>owse...
        </Btn>
      </div>
      <div className="mt-[12px] flex h-[29px] shrink-0 items-center pl-[338px]">
        <div className="h-[29px] w-[24px] border-2 border-[#777] bg-white" />
        <T w={187} className="mt-[2px] ml-[9px]">
          Save <U>p</U>assword in file
        </T>
      </div>
      <div className="mt-[16px] flex h-[26px] shrink-0 items-center pl-[12px]">
        <T w={105}>
          <U>D</U>escription:
        </T>
      </div>
      <div className="mt-[7px] ml-[11px] h-[195px] w-[769px] shrink-0 border-2 border-[#b2b5bb] bg-white pt-[3px] pl-[2px]">
        <div className="flex h-[29px] w-[577px] items-center bg-[#8ac2ff]">
          <T w={577}>(To help others understand what your data connection points to)</T>
        </div>
      </div>
      <div className="mt-[11px] flex h-[26px] shrink-0 items-center pl-[12px]">
        <T w={133}>
          Fr<U>i</U>endly Name:
        </T>
      </div>
      <Field className="mt-[8px] ml-[11px] h-[44px] w-[769px] items-center pb-[3px] pl-[2px]">
        <T w={763}>{fileText}</T>
      </Field>
      <div className="mt-[11px] flex h-[26px] shrink-0 items-center pl-[12px]">
        <T w={156}>
          <U>S</U>earch Keywords:
        </T>
      </div>
      <Field className="mt-[7px] ml-[11px] h-[44px] w-[769px]" />
      <div className="mt-[11px] flex h-[29px] shrink-0 items-center pl-[11px]">
        <div className="h-[29px] w-[24px] border-2 border-[#777] bg-white" />
        <T w={402} className="mt-[3px] ml-[9px]">
          <U>A</U>lways attempt to use this file to refresh data
        </T>
      </div>
      <div className="mt-[13px] flex h-[48px] shrink-0 items-center pl-[12px]">
        <T w={130} className="mt-[4px]">Excel Services:</T>
        <Btn w={223} className="ml-[18px] h-[48px] w-[257px]">
          A<U>u</U>thentication Settings...
        </Btn>
      </div>
      <div className="mx-[11px] mt-[9px] h-[2px] shrink-0 bg-[#dedede]" />
      <div className="mt-[9px] flex h-[49px] shrink-0 pl-[347px]">
        <Btn w={57} className="w-[141px]">Cancel</Btn>
        <Btn w={60} className="ml-[13px] w-[141px]">
          &lt; <U>B</U>ack
        </Btn>
        <Btn w={60} className="ml-[1px] w-[141px]" state="off">Next &gt;</Btn>
        <Btn w={50.5} className="ml-[13px] w-[141px]">
          <U>F</U>inish
        </Btn>
      </div>
    </Win>
  );
}

/* ---------- panel 5 ---------- */

function SmallIcon({ kind }: { kind: "table" | "pivot" | "chart" | "conn" }) {
  return (
    <svg viewBox="0 0 36 44" className="mb-[18px] h-[44px] w-[36px] shrink-0">
      {kind === "table" && (
        <g>
          <path d="M1 1h34v42H1z" fill="#fff" stroke="#4f6ea8" strokeWidth="2" />
          <path d="M1 1h34v8H1z" fill="#5c8ae0" />
          <path d="M8 1v42M15 1v42M22 1v42M29 1v42M1 15h34M1 22h34M1 29h34M1 36h34" stroke="#9fb2d8" strokeWidth="2" />
        </g>
      )}
      {kind === "pivot" && (
        <g>
          <path d="M3 2h31v38H3z" fill="#e4ecfa" stroke="#5470a8" strokeWidth="2.500" />
          <path d="M7 7h6v6H7zM17 7h12v6H17zM7 18h6v17H7z" fill="#fff" stroke="#5470a8" strokeWidth="2" />
          <path d="M17 31h9V20M22 25l4-6 4 6M21 27l-5 4 5 5" fill="none" stroke="#2f4f94" strokeWidth="2.500" />
        </g>
      )}
      {kind === "chart" && (
        <g>
          <path d="M10 1h11v40H10z" fill="#e5b800" />
          <path d="M1 16h9v26H1z" fill="#2f6fd0" />
          <path d="M22 12h9v30h-9z" fill="#c03a2a" />
        </g>
      )}
      {kind === "conn" && (
        <g>
          <path d="M4 2h19l10 12v26H4z" fill="#f5f8ff" stroke="#5470a8" strokeWidth="2.500" />
          <path d="M22 2l10 12H22z" fill="#3b5480" />
          <path d="M8 17h12M8 23h12M8 29h12M8 35h10" stroke="#8fa4cc" strokeWidth="2.500" />
          <path d="M22 20h13v21H22z" fill="#e0b060" stroke="#a87820" strokeWidth="2" />
        </g>
      )}
    </svg>
  );
}

function ImportDialog() {
  return (
    <Win
      pos="left-[2725px] top-[1219px] w-[1006px] h-[998px]"
      bar="h-[119px]"
      title="Import Data"
      titleW={273}
      titleBox="ml-[366px] h-[127px] text-[56px]"
      help="ml-[128px] h-[85px] text-[60px]"
      helpW={25}
      close="ml-[35px] mt-[3px] h-[82px] w-[156px]"
      x="h-[32px] w-[33px]"
      body="ml-[23px] w-[960px] h-[855px] text-[45px]"
    >
      <div className="mt-[29px] flex h-[50px] shrink-0 items-center pl-[22px]">
        <T w={913}>Select how you want to view this data in your workbook.</T>
      </div>
      <div className="mt-[5px] flex h-[77px] shrink-0 items-center pl-[81px] text-[#858585]">
        <SmallIcon kind="table" />
        <div className="mr-[15px] ml-[33px]">
          <Radio size="size-[43px]" off />
        </div>
        <T w={88}>Table</T>
      </div>
      <div className="flex h-[77px] shrink-0 items-center pl-[81px]">
        <SmallIcon kind="pivot" />
        <div className="mr-[15px] ml-[33px]">
          <Radio size="size-[43px]" on />
        </div>
        <T w={286}>
          <U>P</U>ivotTable Report
        </T>
      </div>
      <div className="flex h-[77px] shrink-0 items-center pl-[81px]">
        <SmallIcon kind="chart" />
        <div className="mr-[15px] ml-[33px]">
          <Radio size="size-[43px]" />
        </div>
        <T w={534}>
          Pivot<U>C</U>hart and PivotTable Report
        </T>
      </div>
      <div className="flex h-[77px] shrink-0 items-center pl-[81px]">
        <SmallIcon kind="conn" />
        <div className="mr-[15px] ml-[33px]">
          <Radio size="size-[43px]" />
        </div>
        <T w={379}>
          <U>O</U>nly Create Connection
        </T>
      </div>
      <div className="mt-[9px] flex h-[50px] shrink-0 items-center pl-[22px]">
        <T w={580}>Where do you want to put the data?</T>
      </div>
      <div className="mt-[18px] flex h-[50px] shrink-0 items-center pl-[81px]">
        <Radio size="size-[43px]" on />
        <T w={312} className="ml-[14px]">
          <U>E</U>xisting worksheet:
        </T>
      </div>
      <div className="mt-[22px] ml-[140px] flex h-[76px] w-[656px] shrink-0 border-[3px] border-[#b2b5bb] bg-white">
        <div className="flex flex-1 items-start pt-[5px] pl-[8px]">
          <div className="flex h-[51px] w-[137px] items-center bg-black pl-[3px] text-white">
            <T w={130}>=$A$45</T>
          </div>
        </div>
        <div className="flex w-[73px] items-center justify-center border-[3px] border-[#a5a5a5] bg-linear-to-b from-[#f0f0f0] to-[#e4e4e4]">
          <svg viewBox="0 0 51 45" className="h-[45px] w-[51px]">
            <path d="M1 1h49v43H1z" fill="#fff" stroke="#8fa8d8" strokeWidth="2" />
            <path d="M1 1h18v8H1z" fill="#2f5fc8" />
            <path d="M1 12h49M1 21h49M1 30h49M14 1v43M28 1v43M40 1v43" stroke="#8fa8d8" strokeWidth="2.500" />
            <path d="M1 34h49v10H1z" fill="#5a7fc4" />
            <path d="M16 10h18l-4 6 10 10-8 10-10-12-6 5z" fill="#dc3a1e" />
          </svg>
        </div>
      </div>
      <div className="mt-[20px] flex h-[50px] shrink-0 items-center pl-[81px]">
        <Radio size="size-[43px]" />
        <T w={246} className="ml-[14px]">
          <U>N</U>ew worksheet
        </T>
      </div>
      <div className="mt-[53px] flex h-[85px] shrink-0 pl-[22px]">
        <Btn w={193} className="w-[254px]">
          P<U>r</U>operties...
        </Btn>
        <Btn w={46.5} className="ml-[115px] w-[255px]" state="focus">OK</Btn>
        <Btn w={100.5} className="ml-[34px] w-[255px]">Cancel</Btn>
      </div>
    </Win>
  );
}

/* ---------- annotations ---------- */

const OUT = "0,0 -73.200,2.300 -53.400,21 -189.300,164.700 -153.800,198.400 -18.200,54.500 1.600,72.900";
const INN = "-11.500,12.200 -44.300,13.700 -37.800,21 -172.200,164.500 -155.500,182.500 -18.200,38.500 -10.200,45.500";
const OUT_L = "0,0 72.800,-1.800 53.700,17.700 197.400,155 164.200,190.200 20,53.300 2.400,72.800";
const INN_L = "12.100,11.100 45,10.500 38,17 180,155.600 166.400,173.600 20,36.700 13.900,44.800";
const GREEN = "0,0 -70,20.300 -45.600,33.500 -141.300,208 -98.400,231.300 -3.800,56.700 20.400,70.600";

const arrows: { x: number; y: number; out: string; inn?: string; fill: string; core?: string }[] = [
  { x: 656.6, y: 346.4, out: GREEN, fill: "#92d14f" },
  { x: 1090.9, y: 176.6, out: GREEN, fill: "#92d14f" },
  { x: 2572.2, y: 355.5, out: OUT, inn: INN, fill: "#c00000", core: "#be3227" },
  { x: 2570, y: 535, out: OUT, inn: INN, fill: "#c00000", core: "#be3227" },
  { x: 3104.6, y: 610.5, out: OUT_L, inn: INN_L, fill: "#c00000", core: "#be3227" },
  { x: 2812.6, y: 652, out: OUT_L, inn: INN_L, fill: "#c00000", core: "#be3227" },
  { x: 315.2, y: 1977.7, out: OUT, inn: INN, fill: "#00b0f0", core: "#4a8bb3" },
  { x: 1872.5, y: 1622.1, out: OUT, fill: "#ffc000" },
  { x: 2890.4, y: 1587.8, out: OUT, fill: "#ffc000" },
  { x: 2890.3, y: 1943.2, out: OUT, fill: "#ffc000" },
];

const steps: [string, string][] = [
  ["1", "left-[69px] top-[45px]"],
  ["2", "left-[2161px] top-[45px]"],
  ["3", "left-[74px] top-[1113px]"],
  ["4", "left-[1248px] top-[1124px]"],
  ["5", "left-[2567px] top-[1114px]"],
];

export default function App() {
  return (
    <main className="relative h-[2549px] w-[4096px] overflow-hidden bg-white font-['Noto_Sans',sans-serif] text-[27px] text-[#161616]">
      {/* worksheet grid peeking out around the dialogs */}
      <div className="absolute top-[28px] left-[2486px] h-[858px] w-[1198px] bg-[repeating-linear-gradient(90deg,transparent_0_107px,#dcdcdc_107px_109px,transparent_109px_151px),repeating-linear-gradient(180deg,transparent_0_31px,#dedede_31px_33px,transparent_33px_45.600px)]" />
      <div className="absolute top-[1290px] left-[212px] h-[962px] w-[993px] bg-[repeating-linear-gradient(90deg,transparent_0_84px,#dcdcdc_84px_86px,transparent_86px_176px),repeating-linear-gradient(180deg,transparent_0_17px,#dedede_17px_19px,transparent_19px_58.800px)]" />
      <div className="absolute top-[1243px] left-[1493px] h-[1010px] w-[986px] bg-[repeating-linear-gradient(90deg,transparent_0_29px,#dcdcdc_29px_31px,transparent_31px_121px),repeating-linear-gradient(180deg,transparent_0_29px,#dedede_29px_31px,transparent_31px_44.200px)]" />
      <div className="absolute top-[1210px] left-[2725px] h-[1006px] w-[1011px] bg-[repeating-linear-gradient(90deg,transparent_0_85px,#dcdcdc_85px_87px,transparent_87px_218.700px),repeating-linear-gradient(180deg,transparent_0_70px,#dedede_70px_72px,transparent_72px_77px)]" />

      <ExcelWindow />
      <ServerDialog />
      <TableDialog />
      <SaveDialog />
      <ImportDialog />

      <p className="absolute top-[635px] left-[369px] font-['Liberation_Sans',sans-serif] text-[65.900px] leading-[78.500px] text-black">
        Select <i>From Analysis</i>
        <br />
        <i>Services</i>
      </p>

      {steps.map(([n, at]) => (
        <p key={n} className={`absolute font-['Liberation_Sans',sans-serif] text-[109px] leading-none text-black ${at}`}>
          <b>{n}</b>)
        </p>
      ))}

      <svg viewBox="0 0 4096 2549" className="pointer-events-none absolute inset-0 size-full">
        {arrows.map((a) => (
          <g key={`${a.x}-${a.y}`} transform={`translate(${a.x} ${a.y})`}>
            <polygon points={a.out} fill={a.fill} />
            {a.inn && <polygon points={a.inn} fill={a.core} />}
          </g>
        ))}
      </svg>

      <p className="absolute top-[2448px] left-[4027px] font-['Liberation_Sans',sans-serif] text-[60px] leading-none text-black">9</p>
    </main>
  );
}
